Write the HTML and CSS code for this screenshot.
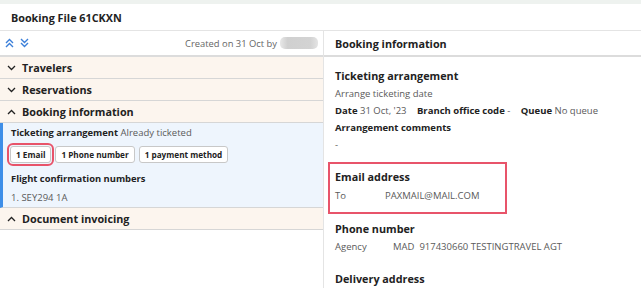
FILE: index.html
```html
<!DOCTYPE html>
<html lang="en">
<head>
  <meta charset="UTF-8" />
  <title>Booking File 61CKXN</title>
  <link rel="stylesheet" href="styles.css">
</head>
<body>

<div class="top-strip"></div>

<!-- Titre -->
<div class="title-bar">
  <h1>Booking File 61CKXN</h1>
</div>

<div class="layout">

  <!-- Panneau gauche -->
  <div class="left-panel">
    <div class="toolbar">
      <div class="toolbar-icons">
        <svg width="9" height="10" viewBox="0 0 9 10"><path d="M1 5 L4.5 1.5 L8 5 M1 9 L4.5 5.5 L8 9" fill="none" stroke="#3b7fd9" stroke-width="1.4"/></svg>
        <svg width="9" height="10" viewBox="0 0 9 10"><path d="M1 1 L4.5 4.5 L8 1 M1 5 L4.5 8.5 L8 5" fill="none" stroke="#3b7fd9" stroke-width="1.4"/></svg>
      </div>
      <div class="created">Created on 31 Oct by <span class="blur"></span></div>
    </div>

    <div class="section-row">
      <svg class="chev" width="9" height="6" viewBox="0 0 9 6"><path d="M1 1 L4.5 4.5 L8 1" fill="none" stroke="#222" stroke-width="1.3"/></svg>
      <span>Travelers</span>
    </div>
    <div class="section-row">
      <svg class="chev" width="9" height="6" viewBox="0 0 9 6"><path d="M1 1 L4.5 4.5 L8 1" fill="none" stroke="#222" stroke-width="1.3"/></svg>
      <span>Reservations</span>
    </div>
    <div class="section-row">
      <svg class="chev" width="9" height="6" viewBox="0 0 9 6"><path d="M1 5 L4.5 1.5 L8 5" fill="none" stroke="#222" stroke-width="1.3"/></svg>
      <span>Booking information</span>
    </div>

    <div class="section-body">
      <div class="line"><b>Ticketing arrangement</b> <span class="muted">Already ticketed</span></div>
      <div class="chips">
        <span class="chip selected">1 Email</span>
        <span class="chip">1 Phone number</span>
        <span class="chip">1 payment method</span>
      </div>
      <div class="line subtitle"><b>Flight confirmation numbers</b></div>
      <div class="line muted numbers">1. SEY294 1A</div>
    </div>

    <div class="section-row">
      <svg class="chev" width="9" height="6" viewBox="0 0 9 6"><path d="M1 5 L4.5 1.5 L8 5" fill="none" stroke="#222" stroke-width="1.3"/></svg>
      <span>Document invoicing</span>
    </div>
  </div>

  <!-- Panneau droit -->
  <div class="right-panel">
    <div class="panel-header">Booking information</div>
    <div class="panel-content">
      <h3 class="first">Ticketing arrangement</h3>
      <p class="muted">Arrange ticketing date</p>
      <p class="details">
        <b>Date</b> <span class="muted">31 Oct, '23</span>
        <b class="gap">Branch office code</b> <span class="muted">-</span>
        <b class="gap">Queue</b> <span class="muted">No queue</span>
      </p>
      <p><b>Arrangement comments</b></p>
      <p class="muted">-</p>

      <div class="highlight-box">
        <h3>Email address</h3>
        <p class="muted spaced"><span class="label">To</span>PAXMAIL@MAIL.COM</p>
      </div>

      <h3 class="phone">Phone number</h3>
      <p class="muted spaced"><span class="label agency">Agency</span>MAD&nbsp; 917430660 TESTINGTRAVEL AGT</p>

      <h3 class="delivery">Delivery address</h3>
    </div>
  </div>

</div>

</body>
</html>
```

FILE: styles.css
```css
/* Styles de base */
body {
  margin: 0;
  font-family: 'Open Sans', 'Liberation Sans', sans-serif;
  color: #222;
  background: white;
  overflow: hidden;
}

.top-strip {
  height: 4px;
  background-color: #eef2ef;
}

.title-bar {
  height: 26px;
  border-bottom: 1px solid #e4e4e4;
  display: flex;
  align-items: center;
  padding-left: 11px;
}

.title-bar h1 {
  margin: 0;
  font-size: 10.8px;
  font-weight: 700;
}

.layout {
  display: flex;
}

/* Panneau gauche */
.left-panel {
  width: 323px;
  border-right: 1px solid #e4e4e4;
  height: 260px;
}

.toolbar {
  height: 24px;
  border-bottom: 2px solid #dcdcdc;
  display: flex;
  align-items: center;
  justify-content: space-between;
  padding: 0 5px;
}

.toolbar-icons {
  display: flex;
  gap: 6px;
}

.created {
  font-size: 9.4px;
  color: #666;
  display: flex;
  align-items: center;
}

.blur {
  display: inline-block;
  width: 38px;
  height: 12px;
  margin-left: 3px;
  border-radius: 5px;
  background: linear-gradient(to right, #e8e8e8, #d0d0d0 20%, #d3d3d3 80%, #e4e4e4);
}

.section-row {
  height: 21px;
  background-color: #fcf5ee;
  border-bottom: 1px solid #d6d6d6;
  display: flex;
  align-items: center;
  padding-left: 7px;
  font-size: 10.8px;
  font-weight: 700;
}

.chev {
  margin-right: 6px;
}

.section-body {
  background-color: #eef5fd;
  border-left: 3px solid #3d8ee8;
  padding: 2px 0 0 8px;
  height: 82px;
  border-bottom: 1px solid #d6d6d6;
  font-size: 9.5px;
}

.section-body .line {
  line-height: 16px;
}

.section-body b {
  font-size: 9.4px;
}

.muted {
  color: #5a5a5a;
}

.chips {
  display: flex;
  gap: 4px;
  margin: 5px 0 0 -1px;
}

.chip {
  background: white;
  border: 1px solid #c8c8c8;
  border-radius: 3px;
  font-size: 8.2px;
  font-weight: 700;
  padding: 1px 5px;
  line-height: 13px;
}

.chip.selected {
  outline: 2px solid #e8546a;
  outline-offset: 1px;
}

.subtitle {
  margin-top: 8px;
}

.section-body .numbers {
  margin-top: 3px;
}

/* Panneau droit */
.right-panel {
  flex: 1;
}

.panel-header {
  height: 24px;
  border-bottom: 2px solid #dcdcdc;
  display: flex;
  align-items: center;
  padding-left: 11px;
  font-size: 10.8px;
  font-weight: 700;
}

.panel-content {
  padding: 10px 11px 0 11px;
  font-size: 9.5px;
}

.panel-content h3 {
  margin: 0;
  font-size: 10.8px;
  font-weight: 700;
  line-height: 18px;
}

.panel-content p {
  margin: 0;
  line-height: 17px;
}

.panel-content p.spaced {
  margin-top: 1px;
}

.panel-content .details .gap {
  margin-left: 8px;
}

.highlight-box {
  width: 165px;
  margin: 9px 0 0 -7px;
  border: 2px solid #e8546a;
  padding: 4px 5px 8px 5px;
}

.label {
  display: inline-block;
  width: 50px;
}

.label.agency {
  width: 58px;
}

.panel-content h3.phone {
  margin-top: 6px;
  line-height: 17px;
}

.panel-content h3.delivery {
  margin-top: 15px;
  line-height: 17px;
}
```
